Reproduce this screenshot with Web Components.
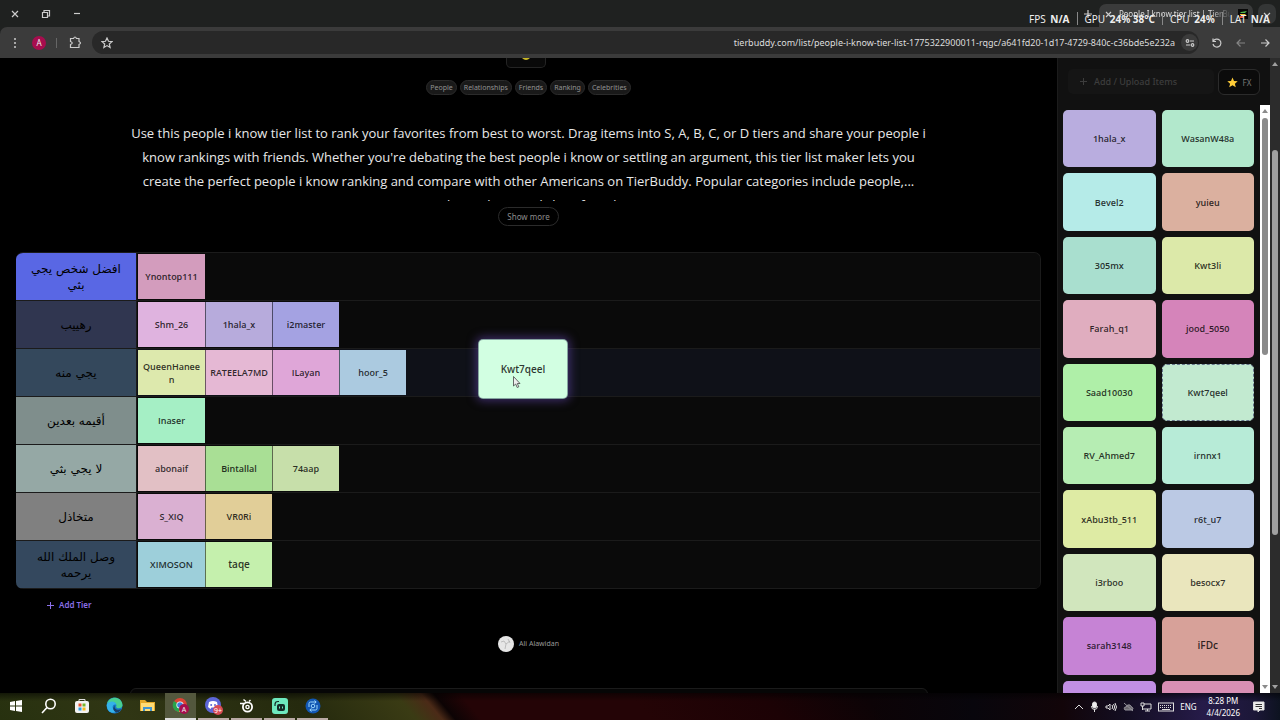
<!DOCTYPE html>
<html lang="en">
<head>
<meta charset="utf-8">
<title>People I know tier list | TierBuddy</title>
<style>
html,body{margin:0;height:100%;background:#000;overflow:hidden}
body{font-family:"Noto Sans","Open Sans",sans-serif;color:#eee}
</style>
</head>
<body>
<tier-desktop></tier-desktop>
<script>
const define = (name, html, init) => customElements.define(name, class extends HTMLElement {
  constructor() {
    super();
    const t = document.createElement('template');
    t.innerHTML = '<style>*{box-sizing:border-box}button,input{font:inherit;margin:0;padding:0;border:0;background:none;color:inherit}svg{display:block;flex:none}</style>' + html;
    this.attachShadow({ mode: 'open' }).append(t.content.cloneNode(true));
  }
  connectedCallback() { if (init) init.call(this, this.shadowRoot); }
});

/* Coloured name card, used in the tiers and in the pool */
define('name-card', `<style>
:host{display:flex;align-items:center;justify-content:center;text-align:center;box-sizing:border-box;background:var(--c);color:#000c;font:600 9px/13px "Open Sans","Noto Sans",sans-serif;overflow-wrap:anywhere}
:host([large]){font-size:10px}
</style><slot></slot>`, function () { this.style.setProperty('--c', this.getAttribute('color')); });

define('tier-row', `<style>
:host{display:flex;height:48px;background:#0a0a0a;border-bottom:1px solid #1b1b1b;overflow:hidden}
:host([active]){background:#0f1118}
.label{width:121px;flex:none;display:flex;align-items:center;justify-content:center;text-align:center;padding:0 8px;background:var(--c);border-right:1px solid #1b1b1b;color:#000;font:12px/16px "DejaVu Sans",sans-serif}
.items{display:flex;padding:1px 0 1px 1px}
::slotted(name-card){width:67px;height:45px;padding:0 3px}
::slotted(name-card:not(:first-child)){border-left:1px solid #0008}
</style><div class="label" dir="rtl"></div><div class="items"><slot></slot></div>`, function (r) {
  r.querySelector('.label').textContent = this.getAttribute('label');
  this.style.setProperty('--c', this.getAttribute('color'));
});

define('scroll-bar', `<style>
:host{display:flex;flex-direction:column;align-items:center;width:10px;flex:none;background:var(--track);color:var(--thumb)}
.before{height:var(--start)}.thumb{width:6px;height:var(--size);border-radius:3px;background:var(--thumb)}
.rest{flex:1}svg{fill:currentColor}
</style><svg width="10" height="12"><path d="M2 8L5 4L8 8Z"/></svg><div class="before"></div><div class="thumb"></div><div class="rest"></div><svg width="10" height="12"><path d="M2 4L5 8L8 4Z"/></svg>`);

define('browser-bar', `<style>
:host{display:block;position:relative;font:10px/14px "Noto Sans",sans-serif;color:#ddd}
svg{fill:none;stroke:#ccc;stroke-width:1.2}
button{display:grid;place-items:center}
.tabs{display:flex;height:27px;background:#1f2120;align-items:center;padding-right:4px}
.win{display:flex;padding-left:7px}.win button{width:16px;height:16px;margin-right:15px}
.tab{margin-left:6px;width:154px;height:23px;align-self:flex-end;display:flex;align-items:center;gap:6px;padding:0 5px;background:#3a3b3b;border-radius:7px 7px 0 0;padding-bottom:3px}
.tab span{flex:1;overflow:hidden;white-space:nowrap;font-size:8px;mask-image:linear-gradient(90deg,#000 80%,transparent)}
.search{width:18px;height:20px;border-radius:7px;background:#343636;margin-left:5px}
.tools{display:flex;align-items:center;height:31px;background:#3b3b3b;padding:0 7px 0 7px;border-radius:7px 0 0 0}
.tools>button{width:16px;height:20px}
.tools>.a{border-radius:50%;background:#a70d4e;width:14px;height:14px;color:#eee;font-size:8px;margin:0 10px 0 9px}
.sep{width:1px;height:10px;background:#666}
.omni{flex:1;display:flex;align-items:center;height:23px;border-radius:12px;background:#282828;margin:0 10px 0 9px;padding:0 1px 0 9px}
.omni input{flex:1;min-width:0;text-align:right;outline:0;font-size:9px;margin-right:6px}
.info{width:17px;height:17px;border-radius:50%;background:#3b3b3b}
.stats{position:absolute;right:10px;top:12px;display:flex;color:#eee;font-size:10px;gap:7px;white-space:nowrap}
.stats b{font-weight:700;margin-left:2px}.stats i{width:1px;height:13px;background:#888}
</style>
<div class="tabs"><div class="win">
<button aria-label="Close"><svg width="10" height="10"><path d="M2 2L8 8M8 2L2 8"/></svg></button>
<button aria-label="Restore"><svg width="10" height="10"><path d="M1.5 3.5H6.5V8.5H1.5ZM3 3V1.5H8.5V7H7"/></svg></button>
<button aria-label="Minimize"><svg width="10" height="10"><path d="M2 4.5H8"/></svg></button></div>
<div style="flex:1"></div><button aria-label="New tab"><svg width="10" height="10"><path d="M5 1V9M1 5H9"/></svg></button>
<div class="tab"><svg width="9" height="9"><path d="M2 2L7 7M7 2L2 7"/></svg><span>People I know tier list | TierBuddy</span>
<svg width="10" height="10" style="stroke:none"><rect width="10" height="10" fill="#080808"/><path d="M3 3L9 2L7 4H2Z" fill="#52b848"/><path d="M2 5H8L7 6H2Z" fill="#efc337"/><path d="M2 7H6L5 9H2Z" fill="#e55634"/></svg></div>
<button class="search" aria-label="Search tabs"><svg width="10" height="10"><path d="M2 4L5 7L8 4"/></svg></button></div>
<div style="background:#1f2120"><div class="tools">
<button aria-label="Menu"><svg width="10" height="12" style="fill:#ccc;stroke:none"><circle cx="5" cy="2" r="1"/><circle cx="5" cy="6" r="1"/><circle cx="5" cy="10" r="1"/></svg></button>
<button class="a">A</button><i class="sep"></i><button aria-label="Extensions" style="margin-left:10px"><svg width="13" height="13"><path d="M1.5 2.5H4.5Q6 -.5 7.5 2.5H10V5.5Q13 7 10 8.5V11.5H1.5V8.5Q5 7 1.5 5.5Z"/></svg></button>
<div class="omni"><svg width="12" height="12"><path d="M6 1L7.5 4.3L11 4.6L8.3 7L9.1 10.5L6 8.6L2.9 10.5L3.7 7L1 4.6L4.5 4.3Z"/></svg>
<input aria-label="Address" value="tierbuddy.com/list/people-i-know-tier-list-1775322900011-rqgc/a641fd20-1d17-4729-840c-c36bde5e232a">
<button class="info" aria-label="Site information"><svg width="10" height="10"><circle cx="2.5" cy="3" r="1.3"/><path d="M5 3H9M1 7H5"/><circle cx="7.5" cy="7" r="1.3"/></svg></button></div>
<button aria-label="Reload"><svg width="12" height="12"><path d="M2 1.5V4.5H5M2.3 4.3A4 4 0 1 1 2 7"/></svg></button>
<button aria-label="Forward" style="margin-left:8px;opacity:.5"><svg width="12" height="12"><path d="M10 6H2M5.5 2.5L2 6L5.5 9.5"/></svg></button>
<button aria-label="Back" style="margin-left:8px"><svg width="12" height="12"><path d="M2 6H10M6.5 2.5L10 6L6.5 9.5"/></svg></button>
</div></div>
<div class="stats"><span>FPS <b>N/A</b></span><i></i><span>GPU <b>24% 38°C</b></span><i></i><span>CPU <b>24%</b></span><i></i><span>LAT <b>N/A</b></span></div>`);

define('tier-page', `<style>
:host{display:flex;flex-direction:column;align-items:center;position:relative;flex:1;min-width:0;background:#000;padding:0 16px;overflow:hidden;font-family:"Noto Sans",sans-serif}
:host>*,nav,p,button,section,div{flex:none}
.react{width:40px;height:10px;border:1px solid #242424;border-top:0;border-radius:0 0 5px 5px;background:#090909;margin-right:5px;display:flex;justify-content:center}
.tags{display:flex;gap:3px;margin-top:12px}
.tags a{font-size:7px;line-height:13px;height:15px;padding:0 3px;border:1px solid #2b2b2b;border-radius:8px;background:#191919;color:#929292;text-decoration:none}
.desc{margin:26px 0 0;height:80px;overflow:hidden;text-align:center;font:13px/24px "Open Sans","Noto Sans",sans-serif;color:#e8e8e8;white-space:nowrap}
.desc span{display:block}
.more{margin-top:6px;width:61px;height:19px;border:1px solid #2b2b2b;border-radius:10px;color:#8c8c8c;font-size:8px}
.board{align-self:stretch;margin-top:26px;box-shadow:inset 0 0 0 1px #1b1b1b;border-right:1px solid #1b1b1b;border-top:1px solid #1b1b1b;border-radius:7px;overflow:hidden}
.add{align-self:flex-start;margin:10px 0 0 30px;display:flex;align-items:center;gap:4px;color:#8b70e8;font-size:8px;font-weight:600;line-height:12px}
.author{display:flex;align-items:center;gap:5px;margin-top:25px;color:#999;font-size:7px;line-height:16px}
.next{width:798px;max-width:100%;height:30px;border:1px solid #1b1b1b;border-radius:6px;margin-top:36px;background:#060606}
.drag{position:absolute;left:479px;top:282px;width:88px;height:58px;border-radius:4px;font-size:10px;box-shadow:0 0 0 1px #85a5a0,0 0 10px 3px #5d43a599}
.cursor{position:absolute;left:512px;top:317px}
</style>
<div class="react"><svg width="10" height="3"><path d="M1 0Q5 4 9 0Z" fill="#cbb927"/></svg></div>
<nav class="tags"><a href="#">People</a><a href="#">Relationships</a><a href="#">Friends</a><a href="#">Ranking</a><a href="#">Celebrities</a></nav>
<p class="desc"><span>Use this people i know tier list to rank your favorites from best to worst. Drag items into S, A, B, C, or D tiers and share your people i</span><span>know rankings with friends. Whether you're debating the best people i know or settling an argument, this tier list maker lets you</span><span>create the perfect people i know ranking and compare with other Americans on TierBuddy. Popular categories include people,...</span><span>relationships, and close friends</span></p>
<button class="more">Show more</button>
<section class="board">
<tier-row label="افضل شخص يجي بثي" color="#5967e4"><name-card color="#d39cbd">Ynontop111</name-card></tier-row>
<tier-row label="رهييب" color="#303650"><name-card color="#dfb3df">Shm_26</name-card><name-card color="#b7abdc">1hala_x</name-card><name-card color="#a4a2e2">i2master</name-card></tier-row>
<tier-row active label="يجي منه" color="#34485c"><name-card color="#dde9ad">QueenHaneen</name-card><name-card color="#e5b8d4">RATEELA7MD</name-card><name-card color="#dfa6d8">ILayan</name-card><name-card color="#abcae0">hoor_5</name-card></tier-row>
<tier-row label="أقيمه بعدين" color="#7f8e8c"><name-card color="#a5efc5">Inaser</name-card></tier-row>
<tier-row label="لا يجي بثي" color="#95a8a5"><name-card color="#e2c0c5">abonaif</name-card><name-card color="#a9df95">Bintallal</name-card><name-card color="#c7dfaa">74aap</name-card></tier-row>
<tier-row label="متخاذل" color="#808080"><name-card color="#dab0d2">S_XIQ</name-card><name-card color="#e1ce98">VR0Ri</name-card></tier-row>
<tier-row label="وصل الملك الله يرحمه" color="#34485e"><name-card color="#9dcfda">XIMOSON</name-card><name-card large color="#c5f0ad">taqe</name-card></tier-row>
</section>
<button class="add"><svg width="9" height="9" fill="none" stroke="#8b70e8"><path d="M4.5 1V8M1 4.5H8"/></svg>Add Tier</button>
<div class="author"><svg width="16" height="16"><circle cx="8" cy="8" r="8" fill="#e6e6e6"/><path d="M3 6L6 5L8 8L12 5M8 8L7 13M10 3L12 7" fill="none" stroke="#aaa" stroke-width=".7"/></svg>Ali Alawidan</div>
<div class="next"></div>
<name-card class="drag" color="#d2ffe2">Kwt7qeel</name-card>
<svg class="cursor" width="9" height="14"><path d="M1.5 1.5V11L3.7 9L5.2 12.5L6.8 11.8L5.3 8.5H8Z" fill="#eee" stroke="#444" stroke-width=".8"/></svg>`);

define('item-pool', `<style>
:host{display:flex;flex-direction:column;width:213px;flex:none;background:#111;border-left:1px solid #1c1c1c;font-family:"Noto Sans",sans-serif;overflow:hidden}
.head{display:flex;gap:4px;padding:11px 10px 10px;flex:none}
.up{flex:1;height:25px;border-radius:5px;background:#151515;color:#3d3d3d;font-size:9px;font-weight:500;display:flex;align-items:center;padding-left:11px;gap:6px}
.fx{width:42px;height:26px;border:1px solid #2b2b2b;border-radius:6px;background:#0b0b0b;color:#777;font-size:8px;display:flex;align-items:center;justify-content:center;gap:5px}
.body{flex:1;min-height:0;display:flex}
.grid{flex:1;display:grid;grid-template-columns:1fr 1fr;gap:6px;align-content:start;padding:5px 6px 0 5px;overflow:hidden}
.grid name-card{aspect-ratio:29/18;border-radius:5px}
.grid .ghost{border:1px dashed #66758b}
scroll-bar{--track:#fff;--thumb:#8b8b8b;--start:1px;--size:237px}
</style>
<div class="head"><button class="up"><svg width="9" height="9" fill="none" stroke="#3d3d3d"><path d="M4.5 1V8M1 4.5H8"/></svg>Add / Upload Items</button>
<button class="fx"><svg width="11" height="11"><path d="M5.5 .5L7 4L10.7 4.3L7.9 6.7L8.8 10.3L5.5 8.3L2.2 10.3L3.1 6.7L.3 4.3L4 4Z" fill="#ffcd38"/></svg>FX</button></div>
<div class="body"><div class="grid">
<name-card color="#b9addf">1hala_x</name-card><name-card color="#b2e8cc">WasanW48a</name-card>
<name-card color="#b5ebe8">Bevel2</name-card><name-card color="#dbb09f">yuieu</name-card>
<name-card color="#a9dfcf">305mx</name-card><name-card color="#dce9a9">Kwt3li</name-card>
<name-card color="#e0adbf">Farah_q1</name-card><name-card color="#d584ba">jood_5050</name-card>
<name-card color="#afefa8">Saad10030</name-card><name-card class="ghost" color="#c2ead0">Kwt7qeel</name-card>
<name-card color="#b6edb3">RV_Ahmed7</name-card><name-card color="#b7ebd7">irnnx1</name-card>
<name-card color="#deeba4">xAbu3tb_511</name-card><name-card color="#bbc9e4">r6t_u7</name-card>
<name-card color="#d1e6bd">i3rboo</name-card><name-card color="#eae6bd">besocx7</name-card>
<name-card color="#c683d5">sarah3148</name-card><name-card large color="#d7a199">iFDc</name-card>
<name-card color="#c18fe3"></name-card><name-card color="#d98fb4"></name-card>
</div><scroll-bar></scroll-bar></div>`);

define('task-bar', `<style>
:host{display:flex;height:27px;flex:none;align-items:stretch;color:#fff;font:8px/12px "Noto Sans",sans-serif;
background:linear-gradient(#0008,transparent 30%),linear-gradient(90deg,transparent 68%,#08060c 76%,#120509 83%,#130e22 88%,#261b49 94%,#1c1738 98%,#0d1320 100%),linear-gradient(50deg,#27310f 0,#303614 10%,#252a0e 24%,#3a3b14 32%,#4b2a17 34%,#0c0304 35%,#240406 37%,#240406 50%,#1c0205 60%,#0c0306 68%)}
.apps{display:flex;gap:2px}
.apps button{width:31px;display:grid;place-items:center;border-bottom:2px solid transparent}
.apps .open{border-color:#b9aaa5}.apps .on{background:#53573d;border-color:#ddd}
.tray{margin-left:auto;display:flex;align-items:center;gap:6px;padding-right:15px}
.tray svg{fill:none;stroke:#ddd}
time{text-align:center;margin:0 7px 0 4px}
</style>
<div class="apps">
<button aria-label="Start"><svg width="12" height="12" fill="#fff"><path d="M0 2L5 1V5.5H0ZM6 .9L12 0V5.5H6ZM0 6.5H5V11L0 10ZM6 6.5H12V12L6 11Z"/></svg></button>
<button aria-label="Search"><svg width="16" height="16" fill="none" stroke="#fff" stroke-width="1.6"><circle cx="9.5" cy="6" r="4.7"/><path d="M6 9.5L1 15"/></svg></button>
<button aria-label="Store"><svg width="16" height="16"><path d="M5 4V1.5H11V4" fill="none" stroke="#ddd"/><rect x="1" y="3" width="14" height="12" rx="2" fill="#f3f3f3"/><path d="M4.5 5.5H7.5V8.5H4.5Z" fill="#e8512f"/><path d="M8.5 5.5H11.5V8.5H8.5Z" fill="#77b52a"/><path d="M4.5 9.5H7.5V12.5H4.5Z" fill="#2a9fe5"/><path d="M8.5 9.5H11.5V12.5H8.5Z" fill="#f6b91d"/></svg></button>
<button aria-label="Edge"><svg width="17" height="17"><circle cx="8.5" cy="8.5" r="8" fill="#1679cb"/><path d="M1 7C3 -2 16 -1 16.5 8C16.5 12 11 12 10 10C12 6 6 3 1 7Z" fill="#48cf91"/><path d="M1 7C4 3 10 4 10.5 8C6 6 5 12 10 15C4 18 0 12 1 7Z" fill="#35b2e9"/><path d="M9 8C7 12 12 14 15.5 12Q13 16 10 15.5Q5 12 9 8Z" fill="#173e69"/></svg></button>
<button aria-label="Files"><svg width="15" height="13"><path d="M0 1H5L7 3H15V12H0Z" fill="#e4a928"/><path d="M1 4H14V12H1Z" fill="#ffdc75"/><path d="M3 12V8H12V12H10V10H5V12Z" fill="#4195cf"/></svg></button>
<button class="on" aria-label="Chrome"><svg width="18" height="18"><circle cx="8" cy="8" r="7" fill="#dd4335"/><path d="M8 8L2 4A7 7 0 0 0 7 15Z" fill="#28a34c"/><path d="M8 8H15A7 7 0 0 1 7 15Z" fill="#f6c332"/><circle cx="8" cy="8" r="3.6" fill="#fff"/><circle cx="8" cy="8" r="2.8" fill="#3f7edb"/><circle cx="12" cy="12" r="5" fill="#a70d4e"/><text x="12" y="15" font-size="7" text-anchor="middle" fill="#eee">A</text></svg></button>
<button class="open" aria-label="Discord"><svg width="18" height="18"><circle cx="8" cy="8" r="8" fill="#5c66d7"/><path d="M4 5Q8 2.8 12 5L13 10L10.5 12L9.5 10.5H6.5L5.5 12L3 10Z" fill="#fff"/><circle cx="6.2" cy="8" r="1" fill="#5c66d7"/><circle cx="10" cy="8" r="1" fill="#5c66d7"/><circle cx="13" cy="13" r="5" fill="#d84b55"/><text x="13" y="16" font-size="7" text-anchor="middle" fill="#fff">9+</text></svg></button>
<button class="open" aria-label="SteelSeries"><svg width="16" height="16" fill="none" stroke="#fff"><circle cx="8.5" cy="9" r="4.6" stroke-width="1.8"/><circle cx="8.5" cy="9" r="1.6" stroke-width="1.4"/><path d="M1 5.5H5M7 3.5L4.5 1.5M10 3.5L11.500 2" stroke-width="1.4"/></svg></button>
<button class="open" aria-label="Streamlabs"><svg width="16" height="16"><rect width="16" height="16" rx="3" fill="#6ee9bf"/><path d="M3 8V6.500Q3 3.500 6 3.500H7" fill="none" stroke="#142a27" stroke-width="1.2"/><rect x="5" y="6" width="8" height="7" rx="2" fill="#142a27"/><path d="M7.500 8.500V10.500M10.500 8.500V10.500" stroke="#6ee9bf"/></svg></button>
<button class="open" aria-label="Camera"><svg width="16" height="16" fill="none" stroke="#9bd8ff"><circle cx="8" cy="8" r="7.5" fill="#1257b3" stroke="none"/><path d="M4 9V5.500Q4 4 5.500 4H11M12 7V10.500Q12 12 10.500 12H5"/><path d="M9.500 2.500L11.200 4L9.500 5.500M6.500 10.500L4.800 12L6.500 13.500"/><circle cx="8" cy="8" r="1.8"/></svg></button>
</div>
<div class="tray">
<svg width="10" height="10"><path d="M1 7L5 3L9 7"/></svg>
<svg width="9" height="12"><rect x="2.500" y="1" width="4" height="6" rx="2" fill="#eee"/><path d="M1.5 5Q1.5 8.5 4.5 8.5T7.5 5M4.5 8V11"/></svg>
<svg width="12" height="10"><path d="M1 4H3L5 2V8L3 6H1ZM7 3Q8.5 5 7 7M8.5 2Q11 5 8.5 8M10 1Q13 5 10 9"/></svg>
<svg width="11" height="10" style="opacity:.65"><path d="M2 8Q0 5 3 5Q4 2 7 3Q8 5 9 5Q11 7 9 8ZM1 1L10 9" fill="#999"/></svg>
<svg width="12" height="10"><path d="M4 2H11V7H3M5 9H10M7.5 7V9M1 1H4V4H1ZM2.5 4V8"/></svg>
<svg width="16" height="10"><rect x=".5" y="1" width="15" height="8"/><path d="M2 3.5H14M2 5.5H14" stroke-dasharray="1 1"/><path d="M4 7.5H12"/></svg>
<span>ENG</span><time>8:28 PM<br>4/4/2026</time>
<svg width="12" height="12"><path d="M.5 1H11V9H7L5 11V9H.5Z" fill="#eee"/><path d="M2.5 3.5H9M2.5 5.5H9M6 7.5H9" stroke="#333"/></svg>
</div>`);

define('tier-desktop', `<style>
:host{display:flex;flex-direction:column;height:100vh}
.view{display:flex;flex:1;min-height:0}
.view>scroll-bar{--track:#2c2c2c;--thumb:#a0a0a0;--start:80px;--size:385px}
</style><browser-bar></browser-bar><div class="view"><tier-page></tier-page><item-pool></item-pool><scroll-bar></scroll-bar></div><task-bar></task-bar>`);
</script>
</body>
</html>
